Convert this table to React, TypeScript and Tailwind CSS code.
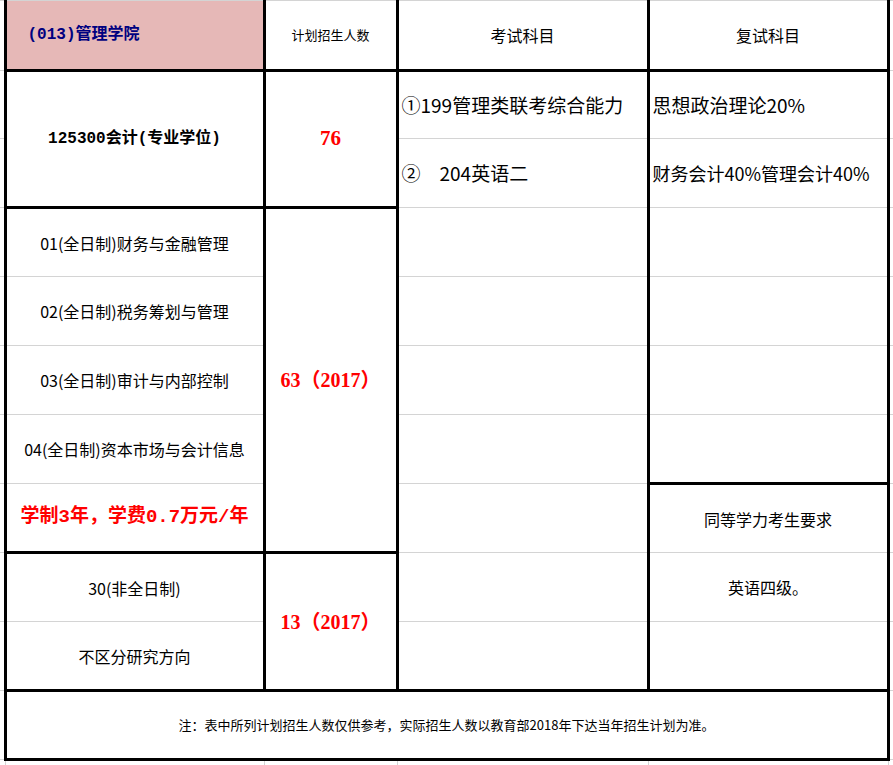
import React from "react";

const G = "border border-[#d4d4d4]";
const L = "border-l-[3px] border-l-black";
const R = "border-r-[3px] border-r-black";
const B = "border-b-[3px] border-b-black";
const CJK = "font-['Noto_Sans_CJK_SC',sans-serif]";
const SERIF = "font-['Liberation_Serif','Noto_Sans_CJK_SC',serif]";
const MONO = "font-['Liberation_Mono','Noto_Sans_CJK_SC',monospace]";

function Spacer({ extra = "" }: { extra?: string }) {
  return <td className={`${G} ${extra}`} />;
}

export default function App() {
  return (
    <div className={`w-[893px] h-[765px] overflow-hidden bg-white text-black ${CJK}`}>
      <table className="border-collapse table-fixed w-[898px]">
        <colgroup>
          <col className="w-[5px]" />
          <col className="w-[259px]" />
          <col className="w-[133px]" />
          <col className="w-[251px]" />
          <col className="w-[240px]" />
          <col className="w-[10px]" />
        </colgroup>
        <tbody>
          {/* header */}
          <tr className="h-[70px]">
            <Spacer extra="border-l-0" />
            <td className={`${G} ${L} ${R} ${B} bg-[#e6b8b7] pl-[21px] text-left text-[16px] font-bold text-[#000080] whitespace-nowrap ${MONO}`}>
              (013)管理学院
            </td>
            <td className={`${G} ${R} ${B} text-center text-[13px]`}>计划招生人数</td>
            <td className={`${G} ${R} ${B} text-center text-[16px]`}>考试科目</td>
            <td className={`${G} ${R} ${B} text-center text-[16px]`}>复试科目</td>
            <Spacer />
          </tr>
          {/* row 1 */}
          <tr className="h-[68px]">
            <Spacer extra="border-l-0" />
            <td rowSpan={2} className={`${G} ${L} ${R} ${B} text-center text-[16px] font-bold whitespace-nowrap ${MONO}`}>
              125300会计(专业学位)
            </td>
            <td rowSpan={2} className={`${G} ${R} ${B} text-center text-[21px] font-bold text-[#ff0000] ${SERIF}`}>
              76
            </td>
            <td className={`${G} ${R} pl-[3px] text-left text-[19px] whitespace-nowrap`}>①199管理类联考综合能力</td>
            <td className={`${G} ${R} pl-[3px] text-left text-[19px] whitespace-nowrap`}>思想政治理论20%</td>
            <Spacer />
          </tr>
          {/* row 2 */}
          <tr className="h-[69px]">
            <Spacer extra="border-l-0" />
            <td className={`${G} ${R} pl-[3px] text-left text-[19px] whitespace-nowrap`}>②　204英语二</td>
            <td className={`${G} ${R} pl-[3px] text-left text-[18px] whitespace-nowrap`}>财务会计40%管理会计40%</td>
            <Spacer />
          </tr>
          {/* row 3 */}
          <tr className="h-[69px]">
            <Spacer extra="border-l-0" />
            <td className={`${G} ${L} ${R} text-center text-[16px] whitespace-nowrap`}>01(全日制)财务与金融管理</td>
            <td rowSpan={5} className={`${G} ${R} ${B} text-center text-[20px] font-bold text-[#ff0000] whitespace-nowrap ${SERIF}`}>
              63（2017）
            </td>
            <td className={`${G} ${R}`} />
            <td className={`${G} ${R}`} />
            <Spacer />
          </tr>
          {/* row 4 */}
          <tr className="h-[69px]">
            <Spacer extra="border-l-0" />
            <td className={`${G} ${L} ${R} text-center text-[16px] whitespace-nowrap`}>02(全日制)税务筹划与管理</td>
            <td className={`${G} ${R}`} />
            <td className={`${G} ${R}`} />
            <Spacer />
          </tr>
          {/* row 5 */}
          <tr className="h-[69px]">
            <Spacer extra="border-l-0" />
            <td className={`${G} ${L} ${R} text-center text-[16px] whitespace-nowrap`}>03(全日制)审计与内部控制</td>
            <td className={`${G} ${R}`} />
            <td className={`${G} ${R}`} />
            <Spacer />
          </tr>
          {/* row 6 */}
          <tr className="h-[69px]">
            <Spacer extra="border-l-0" />
            <td className={`${G} ${L} ${R} text-center text-[16px] whitespace-nowrap`}>04(全日制)资本市场与会计信息</td>
            <td className={`${G} ${R}`} />
            <td className={`${G} ${R} ${B}`} />
            <Spacer />
          </tr>
          {/* row 7 */}
          <tr className="h-[69px]">
            <Spacer extra="border-l-0" />
            <td className={`${G} ${L} ${R} ${B} text-center text-[19px] font-bold text-[#ff0000] whitespace-nowrap ${MONO}`}>
              学制3年，学费0.7万元/年
            </td>
            <td className={`${G} ${R}`} />
            <td className={`${G} ${R} text-center text-[16px] whitespace-nowrap`}>同等学力考生要求</td>
            <Spacer />
          </tr>
          {/* row 8 */}
          <tr className="h-[69px]">
            <Spacer extra="border-l-0" />
            <td className={`${G} ${L} ${R} text-center text-[16px] whitespace-nowrap`}>30(非全日制)</td>
            <td rowSpan={2} className={`${G} ${R} ${B} text-center text-[20px] font-bold text-[#ff0000] whitespace-nowrap ${SERIF}`}>
              13（2017）
            </td>
            <td className={`${G} ${R}`} />
            <td className={`${G} ${R} text-center text-[16px] whitespace-nowrap`}>英语四级。</td>
            <Spacer />
          </tr>
          {/* row 9 */}
          <tr className="h-[69px]">
            <Spacer extra="border-l-0" />
            <td className={`${G} ${L} ${R} ${B} text-center text-[16px] whitespace-nowrap`}>不区分研究方向</td>
            <td className={`${G} ${R} ${B}`} />
            <td className={`${G} ${R} ${B}`} />
            <Spacer />
          </tr>
          {/* footer */}
          <tr className="h-[69px]">
            <Spacer extra="border-l-0" />
            <td colSpan={4} className={`${G} ${L} ${R} ${B} text-center text-[13px] whitespace-nowrap`}>
              注：表中所列计划招生人数仅供参考，实际招生人数以教育部2018年下达当年招生计划为准。
            </td>
            <Spacer />
          </tr>
          {/* bottom strip */}
          <tr className="h-[12px]">
            <Spacer extra="border-l-0" />
            <Spacer />
            <Spacer />
            <Spacer />
            <Spacer />
            <Spacer />
          </tr>
        </tbody>
      </table>
    </div>
  );
}
